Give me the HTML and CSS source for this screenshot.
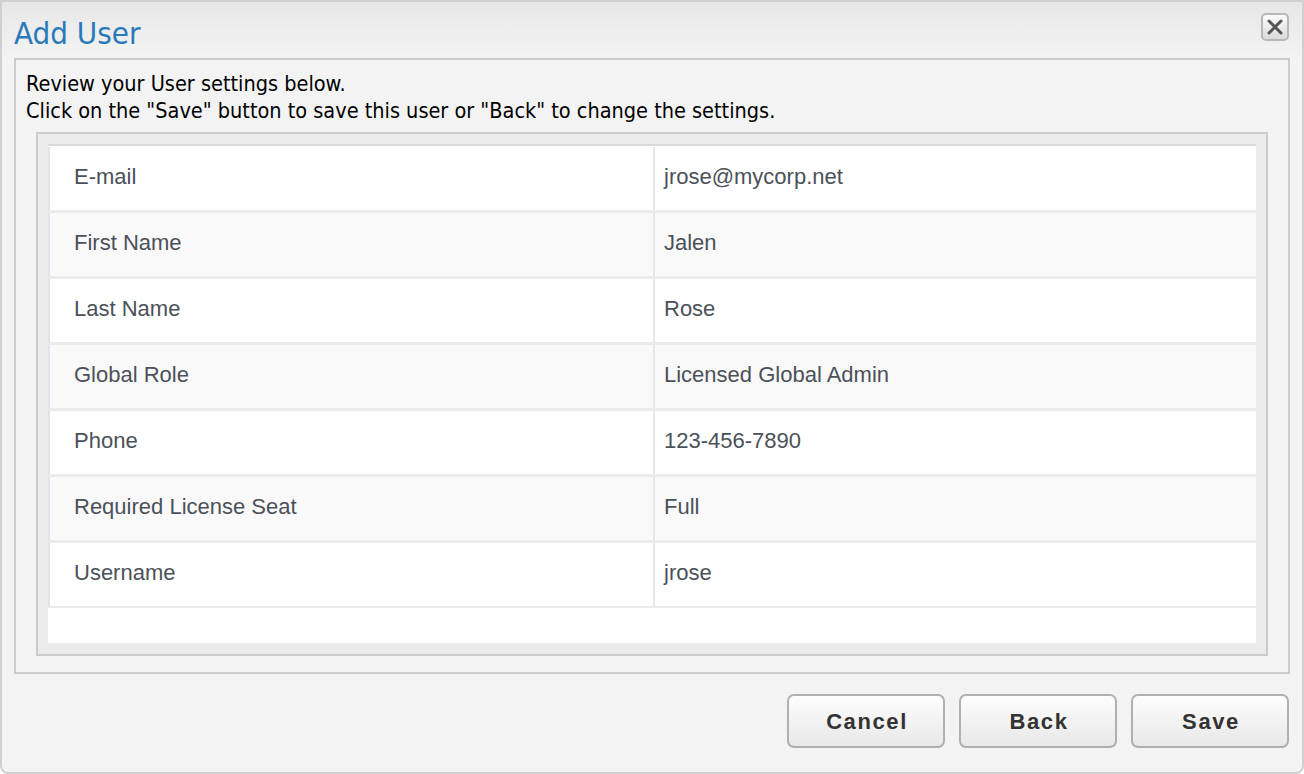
FILE: index.html
```html
<!DOCTYPE html>
<html>
<head>
<meta charset="utf-8">
<title>Add User</title>
<link rel="stylesheet" href="styles.css">
</head>
<body>
<div class="window">
  <div class="header">
    <h1 class="title">Add User</h1>
    <button class="close" aria-label="Close">
      <svg width="20" height="20" viewBox="0 0 20 20"><path d="M4 4 L16 16 M16 4 L4 16" stroke="#555" stroke-width="3" stroke-linecap="round"/></svg>
    </button>
  </div>
  <div class="panel">
    <p class="intro">Review your User settings below.<br>Click on the "Save" button to save this user or "Back" to change the settings.</p>
    <div class="box">
      <div class="table">
        <div class="row"><div class="label">E-mail</div><div class="value">jrose@mycorp.net</div></div>
        <div class="row alt"><div class="label">First Name</div><div class="value">Jalen</div></div>
        <div class="row"><div class="label">Last Name</div><div class="value">Rose</div></div>
        <div class="row alt"><div class="label">Global Role</div><div class="value">Licensed Global Admin</div></div>
        <div class="row"><div class="label">Phone</div><div class="value">123-456-7890</div></div>
        <div class="row alt"><div class="label">Required License Seat</div><div class="value">Full</div></div>
        <div class="row"><div class="label">Username</div><div class="value">jrose</div></div>
      </div>
    </div>
  </div>
  <div class="actions">
    <button class="btn">Cancel</button>
    <button class="btn">Back</button>
    <button class="btn">Save</button>
  </div>
</div>
</body>
</html>
```
FILE: styles.css
```css
html, body {
  margin: 0;
  padding: 0;
  background: #ffffff;
}
.window {
  width: 1304px;
  height: 774px;
  box-sizing: border-box;
  border: 2px solid #d0d0d0;
  border-radius: 0 0 8px 8px;
  background: #f3f3f3;
  display: flex;
  flex-direction: column;
  overflow: hidden;
}
.header {
  height: 56px;
  flex: none;
  display: flex;
  align-items: flex-start;
  justify-content: space-between;
  background: linear-gradient(#e7e7e7, #f3f3f3);
  padding: 0 13px 0 12px;
}
.title {
  margin: 0;
  padding-top: 13px;
  font-family: "DejaVu Sans", sans-serif;
  font-stretch: condensed;
  font-weight: normal;
  font-size: 31px;
  line-height: 36px;
  color: #2a7ab9;
}
.close {
  margin-top: 11px;
  width: 28px;
  height: 28px;
  padding: 0;
  border: 2px solid #b8b8b8;
  border-radius: 5px;
  background: linear-gradient(#fbfbfb, #dcdcdc);
  display: flex;
  align-items: center;
  justify-content: center;
}
.panel {
  margin: 0 12px;
  height: 616px;
  flex: none;
  box-sizing: border-box;
  border: 2px solid #cccccc;
  padding: 10px 20px 16px 20px;
  display: flex;
  flex-direction: column;
}
.intro {
  margin: 0 0 8px -10px;
  font-family: "DejaVu Sans", sans-serif;
  font-stretch: condensed;
  font-size: 21.5px;
  line-height: 27px;
  color: #000;
}
.box {
  flex: 1;
  border: 2px solid #cccccc;
  background: #ebebeb;
  padding: 10px 10px 11px 10px;
  display: flex;
}
.table {
  flex: 1;
  background: #ffffff;
  border-top: 2px solid #dadada;
  padding-top: 1px;
}
.row {
  display: grid;
  grid-template-columns: 1fr 1fr;
  height: 63px;
  border-bottom: 3px solid #ebebeb;
  border-left: 2px solid #e3e3ea;
  background: #ffffff;
  font-family: "Liberation Sans", Arial, sans-serif;
  font-size: 22px;
  color: #4b5159;
}
.row:last-child {
  border-bottom-width: 2px;
}
.row.alt {
  background: #f9f9f9;
}
.label {
  display: flex;
  align-items: center;
  padding-left: 24px;
  padding-bottom: 3px;
}
.value {
  display: flex;
  align-items: center;
  padding-left: 9px;
  padding-bottom: 3px;
  border-left: 2px solid #e6e6ea;
}
.actions {
  flex: 1;
  display: flex;
  justify-content: flex-end;
  align-items: flex-start;
  gap: 14px;
  padding: 20px 13px 0 0;
}
.btn {
  width: 158px;
  height: 54px;
  box-sizing: border-box;
  border: 2px solid #b0b0b0;
  border-radius: 7px;
  background: linear-gradient(#fdfdfd, #e8e8e8);
  font-family: "Liberation Sans", Arial, sans-serif;
  font-weight: bold;
  font-size: 22px;
  letter-spacing: 1.6px;
  color: #333333;
  padding: 2px 0 0 2px;
}
```
